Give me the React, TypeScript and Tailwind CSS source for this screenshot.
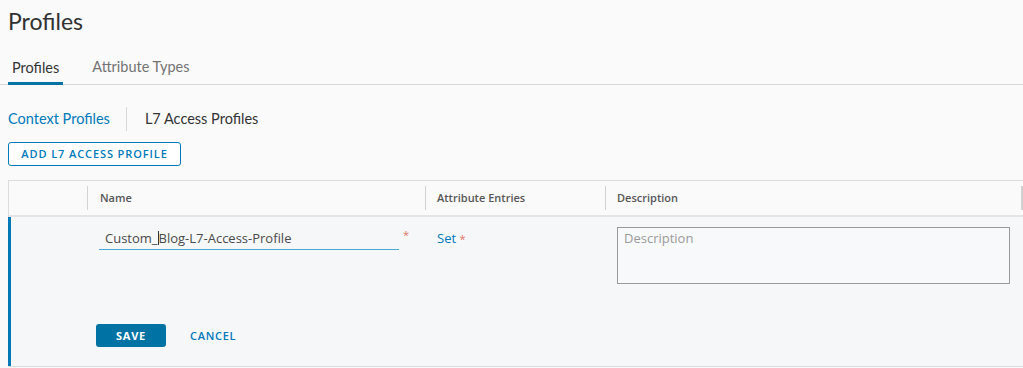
import React from "react";

export default function App() {
  return (
    <div className="w-[1023px] h-[368px] overflow-hidden bg-[#fafafa] text-[#333] font-['Lato',sans-serif]">
      {/* Title */}
      <div className="h-[44px] pl-[8px] pt-[6px]">
        <h1 className="text-[23px] leading-[30px] font-normal text-[#313131]">Profiles</h1>
      </div>

      {/* Tabs */}
      <div className="h-[41px] flex items-end border-b border-[#d7d7d7] pl-[8px]">
        <div className="-mb-px px-[4px] pb-[4px] border-b-[3px] border-[#0072a3] text-[14.5px] leading-[20px] text-[#333]">
          Profiles
        </div>
        <div className="ml-[29px] pb-[7px] text-[14.5px] leading-[20px] text-[#737373]">Attribute Types</div>
      </div>

      {/* Sub nav */}
      <div className="h-[55px] flex items-center pl-[8px] pt-[12px]">
        <span className="text-[14.5px] leading-[20px] text-[#0079b8]">Context Profiles</span>
        <span className="ml-[16px] mr-[18px] w-px h-[24px] bg-[#d7d7d7]" />
        <span className="text-[14.5px] leading-[20px] text-[#333]">L7 Access Profiles</span>
      </div>

      {/* Add button */}
      <div className="pl-[8px]">
        <button className="h-[24px] w-[173px] rounded-[3px] border border-[#0079b8] bg-white text-[11px] font-semibold tracking-[0.9px] text-[#0079b8] font-['Open_Sans',sans-serif]">
          ADD L7 ACCESS PROFILE
        </button>
      </div>

      {/* Table */}
      <div className="mt-[14px] ml-[8px] w-[1030px] border border-[#dcdcdc] font-['Open_Sans',sans-serif]">
        {/* header */}
        <div className="h-[36px] flex items-center bg-[#fafafa] border-b-2 border-[#e4e4e4] text-[11px] font-semibold text-[#565656]">
          <div className="w-[78px] h-full" />
          <div className="w-[338px] h-[24px] flex items-center border-l border-[#d2d2d2] pl-[12px]">Name</div>
          <div className="w-[180px] h-[24px] flex items-center border-l border-[#d2d2d2] pl-[11px]">Attribute Entries</div>
          <div className="w-[416px] h-[24px] flex items-center border-l border-[#d2d2d2] pl-[11px]">Description</div>
          <div className="h-[24px] border-l-2 border-[#d2d2d2]" />
        </div>

        {/* body */}
        <div className="h-[149px] bg-[#f6f7f8] border-l-[3px] border-[#0079b8] -ml-px flex flex-col">
          <div className="flex pt-[10px]">
            <div className="w-[88px] shrink-0" />
            <div className="w-[338px] shrink-0 flex items-start">
              <div className="w-[300px] h-[23px] border-b-[1.5px] border-[#49a8d4] pl-[6px] pt-[3px] text-[13px] leading-[17px] text-[#4a4a4a]">
                Custom_<span className="inline-block w-px h-[14px] bg-[#333] align-[-2px]" />Blog-L7-Access-Profile
              </div>
              <span className="ml-[4px] mt-[2px] text-[11px] leading-[11px] text-[#e27265]">*</span>
            </div>
            <div className="w-[180px] shrink-0 pt-[3px] text-[13px] leading-[17px] text-[#0079b8]">
              Set <span className="text-[11px] align-top text-[#e27265]">*</span>
            </div>
            <div>
              <div className="w-[393px] h-[57px] border border-[#9a9a9a] bg-[#f8f9fa] pl-[6px] pt-[2px] text-[13px] leading-[17px] text-[#9a9a9a]">
                Description
              </div>
            </div>
          </div>
          <div className="mt-[40px] flex items-center pl-[85px]">
            <button className="h-[23px] w-[70px] rounded-[3px] bg-[#0072a3] text-white text-[11px] font-bold tracking-[0.7px]">
              SAVE
            </button>
            <span className="ml-[24px] text-[11px] font-semibold tracking-[0.7px] text-[#0079b8]">CANCEL</span>
          </div>
        </div>
      </div>
    </div>
  );
}
